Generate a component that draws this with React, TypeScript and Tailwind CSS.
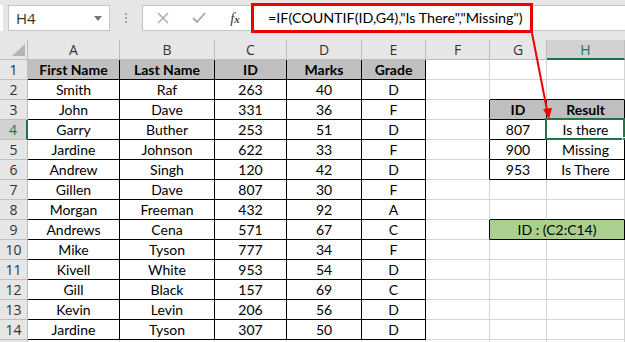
import React from "react";

const colW = [28, 92, 95, 72, 75, 64, 64, 57, 78];
const colLetters = ["A", "B", "C", "D", "E", "F", "G", "H"];

const data: string[][] = [
  ["First Name", "Last Name", "ID", "Marks", "Grade"],
  ["Smith", "Raf", "263", "40", "D"],
  ["John", "Dave", "331", "36", "F"],
  ["Garry", "Buther", "253", "51", "D"],
  ["Jardine", "Johnson", "622", "33", "F"],
  ["Andrew", "Singh", "120", "42", "D"],
  ["Gillen", "Dave", "807", "30", "F"],
  ["Morgan", "Freeman", "432", "92", "A"],
  ["Andrews", "Cena", "571", "67", "C"],
  ["Mike", "Tyson", "777", "34", "F"],
  ["Kivell", "White", "953", "54", "D"],
  ["Gill", "Black", "157", "69", "C"],
  ["Kevin", "Levin", "206", "56", "D"],
  ["Jardine", "Tyson", "307", "50", "D"],
];

const side: Record<string, string> = {
  "3-6": "ID",
  "3-7": "Result",
  "4-6": "807",
  "4-7": "Is there",
  "5-6": "900",
  "5-7": "Missing",
  "6-6": "953",
  "6-7": "Is There",
};

function inTable(r: number, c: number) {
  if (r >= 1 && r <= 14 && c >= 0 && c <= 4) return true;
  if (r >= 3 && r <= 6 && c >= 6 && c <= 7) return true;
  if (r === 9 && c >= 6 && c <= 7) return true;
  return false;
}

function cellText(r: number, c: number): string {
  if (c <= 4) return data[r - 1][c];
  return side[`${r}-${c}`] ?? "";
}

function isGrayHeader(r: number, c: number) {
  if (r === 1 && c <= 4) return true;
  if (r === 3 && (c === 6 || c === 7)) return true;
  return false;
}

export default function App() {
  const rows = Array.from({ length: 15 }, (_, i) => i + 1);
  return (
    <div
      className="relative w-[625px] h-[342px] overflow-hidden bg-white"
      style={{ fontFamily: "Lato, 'Open Sans', sans-serif" }}
    >
      {/* Toolbar */}
      <div className="flex h-[40px] bg-[#e6e6e6] pt-[5px] items-start">
        <div className="w-[3px] h-[26px] bg-white mr-[5px]" />
        <div className="w-[102px] h-[26px] bg-white border border-[#c6c6c6] flex items-center justify-between pl-[7px] pr-[7px]">
          <span className="text-[15px] text-[#333] leading-none" style={{ fontFamily: "'Open Sans', sans-serif" }}>
            H4
          </span>
          <svg width="8" height="5" viewBox="0 0 8 5">
            <path d="M0 0 L8 0 L4 5 Z" fill="#777" />
          </svg>
        </div>
        <div className="w-[32px] h-[26px] flex flex-col items-center justify-center gap-[2px]">
          <div className="w-[2px] h-[2px] bg-[#a8a8a8]" />
          <div className="w-[2px] h-[2px] bg-[#a8a8a8]" />
          <div className="w-[2px] h-[2px] bg-[#a8a8a8]" />
        </div>
        <div className="w-[110px] h-[26px] bg-white border border-[#c6c6c6] flex items-center">
          <div className="w-[36px] flex justify-center pl-[4px]">
            <svg width="12" height="12" viewBox="0 0 12 12">
              <path d="M1 1 L11 11 M11 1 L1 11" stroke="#a6a6a6" strokeWidth="1.4" />
            </svg>
          </div>
          <div className="w-[36px] flex justify-center pl-[4px]">
            <svg width="14" height="12" viewBox="0 0 14 12">
              <path d="M1 6 L5 10 L13 1" stroke="#a6a6a6" strokeWidth="1.8" fill="none" />
            </svg>
          </div>
          <div className="w-[36px] flex justify-center pl-[4px]">
            <span
              className="italic text-[15px] text-[#444] leading-none"
              style={{ fontFamily: "'Liberation Serif', serif" }}
            >
              f<span className="text-[11px] font-bold">x</span>
            </span>
          </div>
        </div>
        <div className="flex-1 h-[26px] bg-white border-y border-[#c6c6c6] flex items-center pl-[16px]">
          <span className="text-[14.3px] text-black leading-none whitespace-nowrap">
            =IF(COUNTIF(ID,G4),"Is There","Missing")
          </span>
        </div>
      </div>

      {/* Red annotation box */}
      <div className="absolute left-[251px] top-[3px] w-[282px] h-[30px] border-[3px] border-[#ee0000]" />

      {/* Grid */}
      <div
        className="grid"
        style={{ gridTemplateColumns: colW.map((w) => `${w}px`).join(" ") }}
      >
        {/* Column header row */}
        <div className="h-[20px] bg-[#e6e6e6] border-r border-b border-[#bdbdbd] relative">
          <svg className="absolute right-[2px] bottom-[3px]" width="13" height="12" viewBox="0 0 13 12">
            <path d="M13 0 L13 12 L0 12 Z" fill="#b5b5b5" />
          </svg>
        </div>
        {colLetters.map((l) => {
          const sel = l === "H";
          return (
            <div
              key={l}
              className={
                sel
                  ? "h-[20px] bg-[#d2d2d2] border-r border-[#bdbdbd] border-b-2 border-b-[#217346] text-[#217346] flex items-center justify-center text-[14px]"
                  : "h-[20px] bg-[#e6e6e6] border-r border-b border-[#bdbdbd] text-[#333] flex items-center justify-center text-[14px]"
              }
              style={{ fontFamily: "'Open Sans', sans-serif" }}
            >
              {l}
            </div>
          );
        })}

        {rows.map((r) => (
          <React.Fragment key={r}>
            <div
              className={
                r === 4
                  ? "h-[20px] bg-[#d2d2d2] border-b border-[#bdbdbd] border-r-2 border-r-[#217346] text-[#217346] flex items-center justify-center text-[14px]"
                  : "h-[20px] bg-[#e6e6e6] border-r border-b border-[#bdbdbd] text-[#333] flex items-center justify-center text-[14px]"
              }
              style={{ fontFamily: "'Open Sans', sans-serif" }}
            >
              {r <= 14 ? r : ""}
            </div>
            {colLetters.map((_, c) => {
              if (r === 9 && c === 6) {
                return (
                  <div
                    key={c}
                    className="col-span-2 h-[20px] bg-[#a9d08e] border-r border-b border-black flex items-center justify-center text-[14px] text-black"
                  >
                    ID : (C2:C14)
                  </div>
                );
              }
              if (r === 9 && c === 7) return null;
              const t = r <= 14 ? cellText(r, c) : "";
              const rightBlack = inTable(r, c) || inTable(r, c + 1);
              const bottomBlack = inTable(r, c) || inTable(r + 1, c);
              const gray = isGrayHeader(r, c);
              const sel = r === 4 && c === 7;
              return (
                <div
                  key={c}
                  className={[
                    "h-[20px] border-r border-b flex items-center justify-center text-[14px] text-black relative",
                    rightBlack ? "border-r-black" : "border-r-[#d4d4d4]",
                    bottomBlack ? "border-b-black" : "border-b-[#d4d4d4]",
                    gray ? "bg-[#bfbfbf] font-bold" : "bg-white",
                  ].join(" ")}
                >
                  {t}
                  {sel && (
                    <>
                      <div className="absolute left-[-2px] top-[-2px] right-[-1px] bottom-[-1px] border-2 border-[#217346]" />
                      <div className="absolute right-[-3px] bottom-[-3px] w-[5px] h-[5px] bg-[#217346] border border-white" />
                    </>
                  )}
                </div>
              );
            })}
          </React.Fragment>
        ))}
      </div>

      {/* Red arrow */}
      <svg className="absolute left-0 top-0 pointer-events-none" width="625" height="342" viewBox="0 0 625 342">
        <line x1="532" y1="33" x2="547" y2="110" stroke="#ee0000" strokeWidth="2" />
        <path d="M543 109 L552 108 L549 119 Z" fill="#ee0000" />
      </svg>
    </div>
  );
}
